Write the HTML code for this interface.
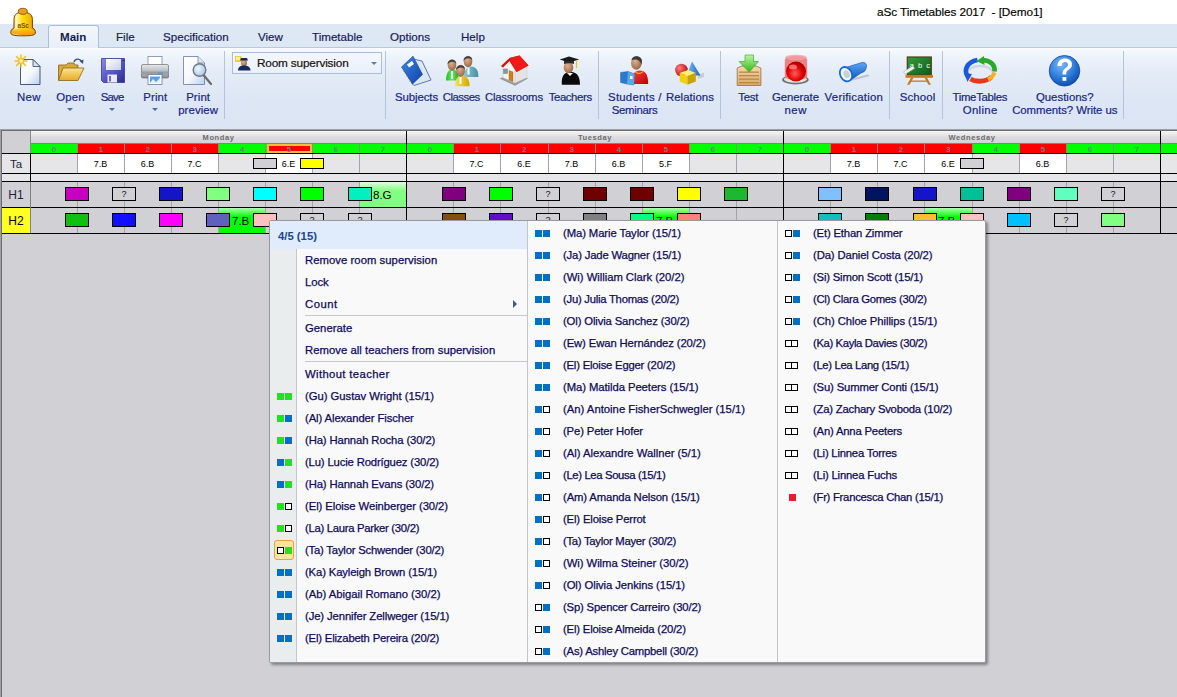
<!DOCTYPE html>
<html><head><meta charset="utf-8"><title>aSc Timetables</title>
<style>
*{box-sizing:border-box;margin:0;padding:0}
html,body{width:1177px;height:697px;overflow:hidden}
body{position:relative;background:#d0d0d5;font-family:"Liberation Sans", sans-serif;font-size:11.3px;color:#1e2a5e}
.a{position:absolute}
.t{position:absolute;white-space:nowrap;line-height:14px}
.rl{position:absolute;white-space:nowrap;line-height:13px;text-align:center;color:#172680;font-size:11.4px;-webkit-text-stroke:0.2px #172680}
.sep{position:absolute;width:1px;background:#b4c4d8;top:51px;height:68px}
.dd{position:absolute;width:0;height:0;border-left:3px solid transparent;border-right:3px solid transparent;border-top:3px solid #4a6aa0}
.pl{position:absolute;top:144px;height:9px;font:bold 8px "Liberation Sans", sans-serif;color:#6f8088;text-align:center;line-height:12px;border-left:1px solid #8a8a8a}
.hl{position:absolute;top:132px;height:11px;font:bold 7.5px "Liberation Sans", sans-serif;color:#6c6c6c;text-align:center;line-height:12px;overflow:hidden;letter-spacing:0.6px}
.vl{position:absolute;width:1px;background:#a4a4a8}
.bk{position:absolute;background:#000}
.bx{position:absolute;width:24px;height:14px;border:1px solid #000}
.q{font:9px "Liberation Sans", sans-serif;color:#111;text-align:center;line-height:12px}
.cl{position:absolute;font:9px "Liberation Sans", sans-serif;color:#000;text-align:center;line-height:19px;top:155px;height:18px}
.mi{position:absolute;white-space:nowrap;height:22px;line-height:22px;color:#0e0a58;font-size:11.3px;-webkit-text-stroke:0.25px #0e0a58}
.ic{position:absolute;width:7px;height:7px}
.g{background:#22e022}
.b{background:#0070c4}
.o{border:1px solid #000;background:#fff}
.r{background:#e0202a}
</style></head><body>
<div class="a" style="left:0;top:0;width:1177px;height:24px;background:#fff"></div>
<div class="t" style="left:877px;top:5px;font-size:11.8px;color:#000;letter-spacing:-0.1px;-webkit-text-stroke:0.15px #000">aSc Timetables 2017&nbsp; - [Demo1]</div>
<div class="a" style="left:0;top:24px;width:1177px;height:24px;background:#dee8f5;border-bottom:1px solid #b8c9de"></div>
<div class="a" style="left:48px;top:25px;width:51px;height:24px;background:linear-gradient(#f3f7fc,#e6eef8);border:1px solid #a9c0dd;border-bottom:none;border-radius:3px 3px 0 0"></div>
<div class="t" style="left:60px;top:30px;font-size:11.6px;font-weight:bold;color:#141a50;">Main</div>
<div class="t" style="left:116px;top:30px;font-size:11.6px;color:#161c58;-webkit-text-stroke:0.2px #161c58;">File</div>
<div class="t" style="left:163px;top:30px;font-size:11.6px;color:#161c58;-webkit-text-stroke:0.2px #161c58;">Specification</div>
<div class="t" style="left:258px;top:30px;font-size:11.6px;color:#161c58;-webkit-text-stroke:0.2px #161c58;">View</div>
<div class="t" style="left:312px;top:30px;font-size:11.6px;color:#161c58;-webkit-text-stroke:0.2px #161c58;">Timetable</div>
<div class="t" style="left:390px;top:30px;font-size:11.6px;color:#161c58;-webkit-text-stroke:0.2px #161c58;">Options</div>
<div class="t" style="left:461px;top:30px;font-size:11.6px;color:#161c58;-webkit-text-stroke:0.2px #161c58;">Help</div>
<svg class="a" style="left:0;top:0" width="45" height="40" viewBox="0 0 45 40">
<defs><linearGradient id="bellg" x1="0" y1="0" x2="1" y2="0"><stop offset="0" stop-color="#f0b000"/><stop offset="0.22" stop-color="#fff8c0"/><stop offset="0.45" stop-color="#ffe010"/><stop offset="1" stop-color="#e89a00"/></linearGradient>
<linearGradient id="bellr" x1="0" y1="0" x2="0" y2="1"><stop offset="0" stop-color="#ffc820"/><stop offset="1" stop-color="#ff8800"/></linearGradient></defs>
<path d="M14 28 L14 19.5 C14 13.5 18 12.3 23 12.3 C28 12.3 32.4 13.5 32.4 19.5 L32.4 28 C35 29 35.6 31 35.4 33 C35 35.5 30 35.8 23 35.8 C16 35.8 11 35.5 10.8 33 C10.6 31 11.5 29 14 28 Z" fill="url(#bellg)" stroke="#7a3c08" stroke-width="1"/>
<path d="M12 31 C14 29 18 28.5 23 28.5 C28 28.5 32 29 34.5 31 C34.5 34 30 35 23 35 C16 35 12 34 12 31 Z" fill="url(#bellr)" opacity="0.85"/>
<ellipse cx="22.8" cy="11.3" rx="4.5" ry="3" fill="#e8a018" stroke="#8a5010" stroke-width="0.9"/>
<text x="23.2" y="28" font-family="Liberation Sans" font-weight="bold" font-size="6.5" fill="#8a4a18" text-anchor="middle">aSc</text>
</svg>
<div class="a" style="left:0;top:48px;width:1177px;height:81px;background:linear-gradient(#f8fbff 0%,#f2f7fd 5%,#eaf1fa 15%,#e4ecf7 30%,#e2eaf6 40%,#dce6f4 70%,#dae4f3 100%)"></div>
<div class="a" style="left:0;top:129px;width:1177px;height:1px;background:#a0a0a4"></div>
<div class="a" style="left:0;top:130px;width:1177px;height:1px;background:#6e6e72"></div>
<div class="sep" style="left:224px"></div>
<div class="sep" style="left:385px"></div>
<div class="sep" style="left:598px"></div>
<div class="sep" style="left:720px"></div>
<div class="sep" style="left:889px"></div>
<div class="sep" style="left:942px"></div>
<div class="sep" style="left:1123px"></div>
<div class="rl" style="left:-31.05px;width:120px;top:91px;letter-spacing:0.404px">New</div>
<div class="rl" style="left:10.58px;width:120px;top:91px;letter-spacing:0.159px">Open</div>
<div class="dd" style="left:67px;top:108px"></div>
<div class="rl" style="left:52.13px;width:120px;top:91px;letter-spacing:-0.741px">Save</div>
<div class="dd" style="left:109px;top:108px"></div>
<div class="rl" style="left:95.36px;width:120px;top:91px;letter-spacing:0.116px">Print</div>
<div class="dd" style="left:152px;top:108px"></div>
<div class="rl" style="left:138.16px;width:120px;top:91px;letter-spacing:0.116px">Print</div>
<div class="rl" style="left:138.15px;width:120px;top:104px;letter-spacing:0.107px">preview</div>
<div class="rl" style="left:356.56px;width:120px;top:91px;letter-spacing:-0.086px">Subjects</div>
<div class="rl" style="left:401.25px;width:120px;top:91px;letter-spacing:-0.502px">Classes</div>
<div class="rl" style="left:453.89px;width:120px;top:91px;letter-spacing:-0.213px">Classrooms</div>
<div class="rl" style="left:510.20px;width:120px;top:91px;letter-spacing:-0.402px">Teachers</div>
<div class="rl" style="left:574.86px;width:120px;top:91px;letter-spacing:0.221px">Students /</div>
<div class="rl" style="left:574.59px;width:120px;top:104px;letter-spacing:-0.314px">Seminars</div>
<div class="rl" style="left:629.93px;width:120px;top:91px;letter-spacing:0.057px">Relations</div>
<div class="rl" style="left:688.19px;width:120px;top:91px;letter-spacing:-0.222px">Test</div>
<div class="rl" style="left:735.47px;width:120px;top:91px;letter-spacing:-0.062px">Generate</div>
<div class="rl" style="left:735.77px;width:120px;top:104px;letter-spacing:0.535px">new</div>
<div class="rl" style="left:793.92px;width:120px;top:91px;letter-spacing:0.240px">Verification</div>
<div class="rl" style="left:857.56px;width:120px;top:91px;letter-spacing:0.129px">School</div>
<div class="rl" style="left:919.83px;width:120px;top:91px;letter-spacing:-0.331px">TimeTables</div>
<div class="rl" style="left:920.16px;width:120px;top:104px;letter-spacing:0.312px">Online</div>
<div class="rl" style="left:1004.81px;width:120px;top:91px;letter-spacing:0.018px">Questions?</div>
<div class="rl" style="left:1004.77px;width:120px;top:104px;letter-spacing:-0.052px">Comments? Write us</div>
<div class="a" style="left:232px;top:52px;width:150px;height:22px;border:1px solid #a6bddb;background:linear-gradient(#f4f8fd,#e9f0f9)"></div>
<div class="t" style="left:257px;top:56px;font-size:11.8px;color:#1a1010;letter-spacing:-0.18px;-webkit-text-stroke:0.2px #1a1010">Room supervision</div>
<div class="dd" style="left:371px;top:62px;border-top-color:#5a7ab0"></div>
<svg class="a" style="left:0;top:0" width="1177" height="130" viewBox="0 0 1177 130">
<defs>
<linearGradient id="gpage" x1="0" y1="0" x2="1" y2="1"><stop offset="0" stop-color="#ffffff"/><stop offset="0.55" stop-color="#f4f7fc"/><stop offset="1" stop-color="#b8d0f0"/></linearGradient>
<radialGradient id="gstar" cx="0.5" cy="0.5" r="0.5"><stop offset="0" stop-color="#fffbe0"/><stop offset="0.4" stop-color="#fde878"/><stop offset="1" stop-color="#f0b818"/></radialGradient>
<linearGradient id="gfold" x1="0" y1="0" x2="0" y2="1"><stop offset="0" stop-color="#fbe49a"/><stop offset="1" stop-color="#e0a830"/></linearGradient>
<linearGradient id="gfold2" x1="0" y1="0" x2="0" y2="1"><stop offset="0" stop-color="#fde490"/><stop offset="1" stop-color="#e6aa28"/></linearGradient>
<linearGradient id="gsave" x1="0" y1="0" x2="1" y2="1"><stop offset="0" stop-color="#8a8ae8"/><stop offset="0.5" stop-color="#5858c8"/><stop offset="1" stop-color="#2a2a90"/></linearGradient>
<linearGradient id="glabel" x1="0" y1="0" x2="1" y2="1"><stop offset="0" stop-color="#ffffff"/><stop offset="1" stop-color="#c8d0e8"/></linearGradient>
<linearGradient id="gprint" x1="0" y1="0" x2="0" y2="1"><stop offset="0" stop-color="#e8eaec"/><stop offset="0.5" stop-color="#b8bcc0"/><stop offset="1" stop-color="#8a8e94"/></linearGradient>
<radialGradient id="glens" cx="0.4" cy="0.4" r="0.6"><stop offset="0" stop-color="#f0f8ff"/><stop offset="1" stop-color="#a8c8ec"/></radialGradient>
<linearGradient id="gbook" x1="0" y1="0" x2="1" y2="1"><stop offset="0" stop-color="#3a8ae8"/><stop offset="1" stop-color="#1040a8"/></linearGradient>
<radialGradient id="gskin" cx="0.4" cy="0.35" r="0.65"><stop offset="0" stop-color="#e0b090"/><stop offset="1" stop-color="#9a6a48"/></radialGradient>
<linearGradient id="ggreen" x1="0" y1="0" x2="1" y2="0"><stop offset="0" stop-color="#20c020"/><stop offset="0.5" stop-color="#60f060"/><stop offset="1" stop-color="#18a818"/></linearGradient>
<linearGradient id="gteal" x1="0" y1="0" x2="1" y2="0"><stop offset="0" stop-color="#88c8d8"/><stop offset="1" stop-color="#4a8ea8"/></linearGradient>
<linearGradient id="gyel" x1="0" y1="0" x2="1" y2="0"><stop offset="0" stop-color="#f8e060"/><stop offset="1" stop-color="#d0a800"/></linearGradient>
<linearGradient id="gred" x1="0" y1="0" x2="1" y2="1"><stop offset="0" stop-color="#ff4040"/><stop offset="1" stop-color="#c00000"/></linearGradient>
<radialGradient id="gball" cx="0.35" cy="0.35" r="0.7"><stop offset="0" stop-color="#ff8080"/><stop offset="1" stop-color="#b00808"/></radialGradient>
<linearGradient id="gcone" x1="0" y1="0" x2="1" y2="0"><stop offset="0" stop-color="#80c0ff"/><stop offset="1" stop-color="#1860c0"/></linearGradient>
<linearGradient id="gbox" x1="0" y1="0" x2="0" y2="1"><stop offset="0" stop-color="#f5d8a8"/><stop offset="1" stop-color="#d8a868"/></linearGradient>
<linearGradient id="garrow" x1="0" y1="0" x2="0" y2="1"><stop offset="0" stop-color="#b8f8a0"/><stop offset="1" stop-color="#30b818"/></linearGradient>
<radialGradient id="gsiren" cx="0.45" cy="0.6" r="0.6"><stop offset="0" stop-color="#ff6060"/><stop offset="0.6" stop-color="#e00000"/><stop offset="1" stop-color="#a80000"/></radialGradient>
<linearGradient id="gflash" x1="0" y1="0" x2="0" y2="1"><stop offset="0" stop-color="#58a8f8"/><stop offset="1" stop-color="#1050b8"/></linearGradient>
<radialGradient id="gq" cx="0.4" cy="0.3" r="0.75"><stop offset="0" stop-color="#7ab8f8"/><stop offset="0.6" stop-color="#2a78d8"/><stop offset="1" stop-color="#0a48a8"/></radialGradient>
<linearGradient id="gboard" x1="0" y1="0" x2="1" y2="1"><stop offset="0" stop-color="#30a040"/><stop offset="1" stop-color="#0a5a18"/></linearGradient>
</defs>
<!-- New -->
<path d="M20.5 59.5 L33 59.5 L40 66.5 L40 84.5 L20.5 84.5 Z" fill="url(#gpage)" stroke="#34486a" stroke-width="0.9"/>
<path d="M33 59.5 L33 66.5 L40 66.5 Z" fill="#d8e2f0" stroke="#34486a" stroke-width="0.8"/>
<g stroke="#f2c020" stroke-width="1.5" stroke-linecap="round"><line x1="21" y1="55" x2="21" y2="67"/><line x1="15" y1="61" x2="27" y2="61"/><line x1="16.5" y1="56.5" x2="25.5" y2="65.5"/><line x1="25.5" y1="56.5" x2="16.5" y2="65.5"/></g>
<circle cx="21" cy="61" r="3" fill="url(#gstar)"/>
<!-- Open -->
<path d="M58.5 65 L66 65 L68 63 L74 63 L75 65 L78 65 L78 68 L58.5 80 Z" fill="#d8a838" stroke="#8a6418" stroke-width="0.8"/>
<path d="M63 68 L84 68 L78 80.5 L58.5 80.5 Z" fill="url(#gfold2)" stroke="#8a6418" stroke-width="0.8"/>
<path d="M74 62 C75 58.5 80 58 81.5 61.5" fill="none" stroke="#3a5078" stroke-width="1.3"/><path d="M79.5 61 L83 64 L83.5 59.5 Z" fill="#3a5078"/>
<!-- Save -->
<path d="M101.5 58.5 L124.5 58.5 L124.5 82.5 L103.5 82.5 L101.5 80.5 Z" fill="url(#gsave)" stroke="#2a2a80" stroke-width="0.7"/>
<rect x="106" y="59" width="15" height="11" fill="url(#glabel)"/>
<rect x="107.5" y="74.5" width="9.5" height="8" fill="#e8eaf4"/><rect x="109" y="76" width="2" height="5.5" fill="#6a6ad0"/>
<circle cx="123" cy="60.5" r="0.8" fill="#202070"/>
<!-- Print -->
<rect x="148" y="56.5" width="14" height="9" fill="#fff" stroke="#7a8aa8" stroke-width="0.8"/>
<path d="M141.5 66 Q141.5 64.5 143 64.5 L167 64.5 Q168.5 64.5 168.5 66 L168.5 77 Q168.5 78 167 78 L143 78 Q141.5 78 141.5 77 Z" fill="url(#gprint)" stroke="#6a6e74" stroke-width="0.7"/>
<rect x="141.5" y="71.5" width="27" height="2.5" fill="#9a9ea4"/><rect x="158" y="72.5" width="5" height="1.2" fill="#3a9ae8"/>
<rect x="148" y="74.5" width="14" height="10" fill="#fff" stroke="#6a7a98" stroke-width="0.8"/><rect x="150" y="76.5" width="10" height="6.5" fill="#5aa0e8"/><path d="M150 83 L153 79 L156 82 L160 78 L160 83 Z" fill="#dff0ff"/>
<!-- Print preview -->
<path d="M183.5 56.5 L198 56.5 L204.5 63 L204.5 84.5 L183.5 84.5 Z" fill="url(#gpage)" stroke="#6a7a98" stroke-width="0.8"/>
<path d="M198 56.5 L198 63 L204.5 63" fill="#dde4ee" stroke="#6a7a98" stroke-width="0.7"/>
<line x1="203.5" y1="75" x2="211" y2="84" stroke="#6a6a6a" stroke-width="2.2" stroke-linecap="round"/>
<circle cx="199.5" cy="70" r="6.3" fill="url(#glens)" stroke="#707880" stroke-width="1.4"/>
<!-- Subjects -->
<path d="M413 59 L422 61 L431 80 L414 85.5 L412 83.5 Z" fill="#dce8ee" stroke="#3a5aa8" stroke-width="0.8"/>
<path d="M413 56.2 L422.5 74.5 L412.5 84 L401.5 67 Z" fill="url(#gbook)" stroke="#0e3888" stroke-width="0.6"/>
<path d="M407 64.5 L412 61 L414 64 L409 67.5 Z" fill="#fff"/>
<g fill="#777"><circle cx="402.5" cy="68.5" r="0.6"/><circle cx="404" cy="71" r="0.6"/><circle cx="405.5" cy="73.5" r="0.6"/><circle cx="407" cy="76" r="0.6"/><circle cx="408.5" cy="78.5" r="0.6"/><circle cx="410" cy="81" r="0.6"/></g>
<!-- Classes -->
<path d="M464 77 C464 69.5 467.5 66.5 471 66.5 C475 66.5 478.3 69.5 478.3 75.5 L478.3 77 Z" fill="url(#gteal)"/><rect x="467.5" y="67.5" width="2" height="7" fill="#fff"/>
<ellipse cx="468" cy="61.5" rx="4.3" ry="5.8" fill="url(#gskin)"/><path d="M463.6 61 C463 55 472.5 54.5 472.4 60.5 C471 57.5 465.5 57.5 463.6 61 Z" fill="#404040"/>
<path d="M446 80.5 C446 72.5 449 69.5 452.3 69.5 C456 69.5 458.7 72.5 458.7 80.5 Z" fill="url(#ggreen)"/><rect x="451" y="71" width="2" height="8" fill="#fff"/>
<ellipse cx="452" cy="65" rx="4.3" ry="5.8" fill="url(#gskin)"/><path d="M447.6 64.5 C447 58.5 456.5 58 456.4 64 C455 61 449.5 61 447.6 64.5 Z" fill="#404040"/>
<path d="M455 86.3 C455 78.5 458 75.5 462 75.5 C466 75.5 469.6 78.5 469.6 86.3 Z" fill="url(#gyel)"/><rect x="459.5" y="77" width="2" height="7" fill="#fff"/>
<ellipse cx="460.6" cy="70.7" rx="4.4" ry="6" fill="url(#gskin)"/><path d="M456.1 70.2 C455.5 64 465.2 63.5 465.1 69.7 C463.7 66.7 458 66.7 456.1 70.2 Z" fill="#404040"/>
<!-- Classrooms -->
<path d="M499.5 78.5 L515 85.7 L528 78.5 L515 73 Z" fill="#9a9a9a"/>
<path d="M503 66 L509 60 L515 70 L515 83 L503 77.5 Z" fill="#f4f4f4" stroke="#c8c8c8" stroke-width="0.5"/>
<path d="M515 70 L527 64 L527 77.5 L515 83 Z" fill="#e4e4e4" stroke="#c8c8c8" stroke-width="0.5"/>
<path d="M501 66 L509.5 58 L519.5 55.5 L528.5 65.5 L516.5 72 L509.5 61 L503 67.5 Z" fill="#e00808"/>
<path d="M509.5 58 L519.5 55.5 L528.5 65.5 L516.5 72 Z" fill="#ee1a1a"/>
<rect x="503.5" y="69" width="4" height="4.5" fill="#6a98d8" stroke="#b08040" stroke-width="0.6"/>
<path d="M509 70.5 L513 72 L513 81.5 L509 80 Z" fill="#d08018" stroke="#9a5a08" stroke-width="0.4"/>
<!-- Teachers -->
<path d="M561.8 84.8 C561 74 566 72 570.5 72 C575 72 580 74 580 84.8 Z" fill="#0a0a0a"/>
<path d="M567 73 L570 76 L573 73 Z" fill="#fff"/>
<ellipse cx="568.5" cy="67.5" rx="4.8" ry="5.8" fill="url(#gskin)"/>
<path d="M559.7 59.5 L569 56.4 L579.2 59.5 L569 62.5 Z" fill="#1a1a1a"/><path d="M564 61 L564 64 C566 63 572 63 574 64 L574 61 Z" fill="#2a2a2a"/>
<line x1="576.5" y1="60" x2="576.5" y2="68" stroke="#e8c020" stroke-width="1.2"/>
<!-- Students -->
<path d="M630.8 84 C630.8 74 635 70.5 640 70.5 C645 70.5 648.2 74 648.2 84 Z" fill="url(#gred)"/>
<path d="M635 71.5 C637 74 641 74 643 71.5" fill="none" stroke="#f0d040" stroke-width="1"/>
<ellipse cx="636.3" cy="63" rx="5.3" ry="6.8" fill="url(#gskin)"/><path d="M631.5 60 C632 54.5 642 55 642 61 L641.5 65 C640.5 60 636 58.5 631.5 60 Z" fill="#3a3a3a"/>
<path d="M620.6 72.5 L628 71.5 L634.6 74 L634 84.8 L627 84 L620.6 82.5 Z" fill="#2a7ad0" stroke="#1a5aa8" stroke-width="0.5"/>
<path d="M628 71.5 L634.6 74 L634 84.8 L627 84 Z" fill="#5aa8e8"/><rect x="630" y="76" width="2.5" height="3" fill="#fff"/>
<!-- Relations -->
<path d="M698 75 L704 72.5 L704 77 L698 79 Z" fill="#c8ccd4"/>
<path d="M692 61.5 L700.5 75.5 L686.5 75.5 Z" fill="url(#gcone)"/>
<circle cx="681.4" cy="70" r="6.3" fill="url(#gball)"/>
<path d="M679.7 73 L688 70 L695.8 73 L687.5 76 Z" fill="#fff070"/>
<path d="M679.7 73 L687.5 76 L687.5 84.8 L679.7 81.5 Z" fill="#f0d010"/>
<path d="M687.5 76 L695.8 73 L695.8 81.5 L687.5 84.8 Z" fill="#c8a400"/>
<!-- Test -->
<path d="M737.2 68 L742 66 L756 66 L760.9 68 L760.9 85.5 L737.2 85.5 Z" fill="url(#gbox)" stroke="#9a7040" stroke-width="0.8"/>
<rect x="739" y="71.5" width="20" height="1.3" fill="#b8884a"/><rect x="739" y="75" width="20" height="1.3" fill="#b8884a"/><rect x="739" y="78.5" width="20" height="1.3" fill="#b8884a"/><rect x="739" y="82" width="20" height="1.3" fill="#b8884a"/>
<path d="M745 55 L753.5 55 L753.5 61.5 L758.5 61.5 L749.2 72 L739 61.5 L745 61.5 Z" fill="url(#garrow)" stroke="#3a9a28" stroke-width="0.6"/>
<!-- Generate new -->
<ellipse cx="795.4" cy="79.8" rx="13.3" ry="4.7" fill="#707070"/><ellipse cx="795.4" cy="79.3" rx="11.5" ry="3.4" fill="#e4e4e4"/>
<path d="M784.8 60 C784.8 54.5 807.2 54.5 807.2 60 L807.2 76 C807.2 81.5 784.8 81.5 784.8 76 Z" fill="#e86868" opacity="0.8"/>
<ellipse cx="796" cy="57.5" rx="11" ry="2.8" fill="#f4a0a0" opacity="0.8"/>
<circle cx="796" cy="71.5" r="10" fill="url(#gsiren)"/>
<ellipse cx="793" cy="67" rx="4" ry="2.5" fill="#ff9a9a" opacity="0.7"/>
<!-- Verification -->
<path d="M852 79.5 L868 75.5" stroke="#bcc4cc" stroke-width="2.2" stroke-linecap="round"/>
<path d="M844 68 L862 62.5 Q866.5 62 866.5 66 L866 69 Q865 72 861 73 L850 80.5 Z" fill="url(#gflash)" stroke="#0e4aa8" stroke-width="0.6"/>
<ellipse cx="846" cy="74.2" rx="5.8" ry="7.5" transform="rotate(-28 846 74.2)" fill="#f4f6f8" stroke="#1a6ad8" stroke-width="1.8"/>
<ellipse cx="846.5" cy="74.5" rx="3" ry="4" transform="rotate(-28 846 74.2)" fill="#c8d0d8"/>
<!-- School -->
<rect x="907.3" y="57" width="24" height="18" fill="url(#gboard)" stroke="#5a3a10" stroke-width="1.2"/>
<text x="920.5" y="67.5" font-family="Liberation Sans" font-size="7.5" fill="#fff" text-anchor="middle" letter-spacing="1">a b c</text>
<rect x="905.5" y="75" width="27.5" height="2.8" fill="#c8781e"/>
<path d="M911 77.8 L907 84.7 L909.5 84.7 L913.5 77.8 Z M927 77.8 L931 84.7 L928.5 84.7 L924.5 77.8 Z" fill="#c8781e"/><rect x="911" y="80.5" width="16" height="1.3" fill="#c8781e"/>
<path d="M903.5 71.8 L912.8 66 L914.6 68.5 L905.2 74.2 Z" fill="#f4f4f4" stroke="#9a9a9a" stroke-width="0.5"/>
<!-- TimeTables Online -->
<ellipse cx="980" cy="73" rx="13" ry="7" fill="none" stroke="#c0c4cc" stroke-width="2.5" opacity="0.6"/>
<path d="M967.5 76 C963.5 70 967 62 977.5 60" fill="none" stroke="#1a5ad8" stroke-width="4.6"/>
<path d="M964 73 L967.5 82 L972 74 Z" fill="#1a5ad8"/>
<path d="M983 60 C990.5 60.5 995.5 65 994.5 71.5" fill="none" stroke="#2aa82a" stroke-width="4.6"/>
<path d="M984 56 L976.5 61 L984.5 65 Z" fill="#2aa82a"/>
<path d="M970.5 79 C976 82.5 986 82 991.5 77" fill="none" stroke="#e83818" stroke-width="4.8"/>
<path d="M988 79.5 C991 78 993.5 76 994.5 72.5" fill="none" stroke="#f8b020" stroke-width="4"/>
<!-- Questions -->
<circle cx="1064.5" cy="70.8" r="15.3" fill="url(#gq)" stroke="#0a3a90" stroke-width="0.7"/>
<path d="M1057.5 66 C1057.5 60.5 1061 58.5 1065 58.5 C1069.5 58.5 1072 61 1072 64.5 C1072 68 1069.5 69 1067.5 70.5 C1066.5 71.3 1066.3 72.5 1066.3 74.5 L1062.5 74.5 C1062.5 71.5 1063 70 1065 68.5 C1067 67 1068 66.3 1068 64.5 C1068 63 1067 62 1065 62 C1063 62 1061.8 63.3 1061.6 66 Z" fill="#fff"/>
<rect x="1062.5" y="77" width="3.8" height="3.8" fill="#fff"/>
<!-- Room supervision small icon -->
<rect x="235" y="56" width="6.5" height="6" fill="#e8d040"/><rect x="236" y="57" width="4" height="3" fill="#f8f0a0"/>
<ellipse cx="244" cy="63" rx="3" ry="3.2" fill="url(#gskin)"/>
<path d="M240 60.5 L248 60.5 L247 58 L241 58 Z" fill="#1a2a50"/>
<path d="M238 70.5 C238 66.5 241 65.5 244 65.5 C247 65.5 250.5 66.5 250.5 70.5 Z" fill="#1a2a60"/>
</svg>
<div class="a" style="left:0;top:129px;width:1px;height:568px;background:#a0a0a4"></div>
<div class="a" style="left:1px;top:130px;width:1px;height:567px;background:#6e6e72"></div>
<div class="a" style="left:2px;top:131px;width:28px;height:22px;background:#d0d0d5"></div>
<div class="a" style="left:31px;top:131px;width:1146px;height:12px;background:linear-gradient(#f6f6f8 0%,#dcdce0 55%,#d2d2d6 100%)"></div>
<div class="a" style="left:31px;top:143px;width:1146px;height:1px;background:#788888"></div>
<div class="a" style="left:2px;top:154px;width:1175px;height:19px;background:#e6e6e8"></div>
<div class="a" style="left:2px;top:174px;width:1175px;height:7px;background:#e6e6e8"></div>
<div class="a" style="left:2px;top:182px;width:1175px;height:25px;background:#d0d0d5"></div>
<div class="a" style="left:2px;top:208px;width:1175px;height:25px;background:#d0d0d5"></div>
<div class="a" style="left:2px;top:208px;width:28px;height:25px;background:#ffff20"></div>
<div class="t" style="left:2px;width:28px;text-align:center;top:157px;font-size:11.5px;color:#1e1e3e;line-height:14px">Ta</div>
<div class="t" style="left:2px;width:28px;text-align:center;top:188px;font-size:12px;color:#1e1e3e;line-height:14px">H1</div>
<div class="t" style="left:2px;width:28px;text-align:center;top:214px;font-size:12px;color:#000;line-height:14px">H2</div>
<div class="hl" style="left:31px;width:375px">Monday</div>
<div class="pl" style="left:31px;width:46px;background:#00ff00;border-left:none">0</div>
<div class="pl" style="left:77px;width:47px;background:#ff0000">1</div>
<div class="pl" style="left:124px;width:47px;background:#ff0000">2</div>
<div class="pl" style="left:171px;width:47px;background:#ff0000">3</div>
<div class="pl" style="left:218px;width:47px;background:#00ff00">4</div>
<div class="pl" style="left:265px;width:47px;background:#00ff00;padding:0"><div style="position:absolute;left:1px;top:0;width:45px;height:9px;border:2px solid #f0c040;background:#ff0000"></div><span style="position:relative">5</span></div>
<div class="pl" style="left:312px;width:47px;background:#00ff00">6</div>
<div class="pl" style="left:359px;width:47px;background:#00ff00">7</div>
<div class="a" style="left:77px;top:154px;width:47px;height:19px;background:#fff"></div>
<div class="a" style="left:124px;top:154px;width:47px;height:19px;background:#fff"></div>
<div class="a" style="left:171px;top:154px;width:47px;height:19px;background:#fff"></div>
<div class="a" style="left:265px;top:154px;width:47px;height:19px;background:#fff"></div>
<div class="a" style="left:360px;top:182px;width:46px;height:25px;background:linear-gradient(#e0ffe0 0px,#80ff80 9px)"></div>
<div class="a" style="left:219px;top:208px;width:46px;height:25px;background:linear-gradient(#b0ffb0 0px,#00ff00 9px)"></div>
<div class="vl" style="left:77px;top:154px;height:19px"></div>
<div class="vl" style="left:77px;top:182px;height:51px"></div>
<div class="vl" style="left:124px;top:154px;height:19px"></div>
<div class="vl" style="left:124px;top:182px;height:51px"></div>
<div class="vl" style="left:171px;top:154px;height:19px"></div>
<div class="vl" style="left:171px;top:182px;height:51px"></div>
<div class="vl" style="left:218px;top:154px;height:19px"></div>
<div class="vl" style="left:218px;top:182px;height:51px"></div>
<div class="vl" style="left:265px;top:154px;height:19px"></div>
<div class="vl" style="left:265px;top:182px;height:51px"></div>
<div class="vl" style="left:312px;top:154px;height:19px"></div>
<div class="vl" style="left:312px;top:182px;height:51px"></div>
<div class="vl" style="left:359px;top:154px;height:19px"></div>
<div class="vl" style="left:359px;top:182px;height:51px"></div>
<div class="cl" style="left:77px;width:47px">7.B</div>
<div class="cl" style="left:124px;width:47px">6.B</div>
<div class="cl" style="left:171px;width:47px">7.C</div>
<div class="cl" style="left:265px;width:47px">6.E</div>
<div class="bx" style="left:253px;top:158px;height:11px;background:#d0d0d5"></div>
<div class="bx" style="left:300px;top:158px;height:11px;background:#ffff00"></div>
<div class="t" style="left:373px;top:188px;font-size:11.5px;color:#000">8.G</div>
<div class="t" style="left:232px;top:214px;font-size:11.5px;color:#000">7.B</div>
<div class="bx" style="left:65px;top:187px;background:#c800c0"></div>
<div class="bx q" style="left:112px;top:187px;background:#d0d0d5">?</div>
<div class="bx" style="left:159px;top:187px;background:#1414c8"></div>
<div class="bx" style="left:206px;top:187px;background:#80ff80"></div>
<div class="bx" style="left:253px;top:187px;background:#00ffff"></div>
<div class="bx" style="left:300px;top:187px;background:#00ff00"></div>
<div class="bx" style="left:348px;top:187px;background:#00f0c0"></div>
<div class="bx" style="left:65px;top:213px;background:#10c010"></div>
<div class="bx" style="left:112px;top:213px;background:#1010ff"></div>
<div class="bx" style="left:159px;top:213px;background:#ff00ff"></div>
<div class="bx" style="left:206px;top:213px;background:#6060c0"></div>
<div class="bx" style="left:253px;top:213px;background:#ffc0c0"></div>
<div class="bx q" style="left:300px;top:213px;background:#d0d0d5">?</div>
<div class="bx q" style="left:348px;top:213px;background:#d0d0d5">?</div>
<div class="bk" style="left:406px;top:131px;width:1px;height:103px"></div>
<div class="hl" style="left:407px;width:376px">Tuesday</div>
<div class="pl" style="left:407px;width:46px;background:#00ff00;border-left:none">0</div>
<div class="pl" style="left:453px;width:47px;background:#ff0000">1</div>
<div class="pl" style="left:500px;width:48px;background:#ff0000">2</div>
<div class="pl" style="left:548px;width:47px;background:#ff0000">3</div>
<div class="pl" style="left:595px;width:47px;background:#ff0000">4</div>
<div class="pl" style="left:642px;width:47px;background:#ff0000">5</div>
<div class="pl" style="left:689px;width:47px;background:#00ff00">6</div>
<div class="pl" style="left:736px;width:47px;background:#00ff00">7</div>
<div class="a" style="left:453px;top:154px;width:47px;height:19px;background:#fff"></div>
<div class="a" style="left:500px;top:154px;width:48px;height:19px;background:#fff"></div>
<div class="a" style="left:548px;top:154px;width:47px;height:19px;background:#fff"></div>
<div class="a" style="left:595px;top:154px;width:47px;height:19px;background:#fff"></div>
<div class="a" style="left:642px;top:154px;width:47px;height:19px;background:#fff"></div>
<div class="a" style="left:643px;top:208px;width:46px;height:25px;background:linear-gradient(#b0ffb0 0px,#00ff00 9px)"></div>
<div class="vl" style="left:453px;top:154px;height:19px"></div>
<div class="vl" style="left:453px;top:182px;height:51px"></div>
<div class="vl" style="left:500px;top:154px;height:19px"></div>
<div class="vl" style="left:500px;top:182px;height:51px"></div>
<div class="vl" style="left:548px;top:154px;height:19px"></div>
<div class="vl" style="left:548px;top:182px;height:51px"></div>
<div class="vl" style="left:595px;top:154px;height:19px"></div>
<div class="vl" style="left:595px;top:182px;height:51px"></div>
<div class="vl" style="left:642px;top:154px;height:19px"></div>
<div class="vl" style="left:642px;top:182px;height:51px"></div>
<div class="vl" style="left:689px;top:154px;height:19px"></div>
<div class="vl" style="left:689px;top:182px;height:51px"></div>
<div class="vl" style="left:736px;top:154px;height:19px"></div>
<div class="vl" style="left:736px;top:182px;height:51px"></div>
<div class="cl" style="left:453px;width:47px">7.C</div>
<div class="cl" style="left:500px;width:48px">6.E</div>
<div class="cl" style="left:548px;width:47px">7.B</div>
<div class="cl" style="left:595px;width:47px">6.B</div>
<div class="cl" style="left:642px;width:47px">5.F</div>
<div class="t" style="left:656px;top:214px;font-size:11.5px;color:#000">7.B</div>
<div class="bx" style="left:442px;top:187px;background:#800080"></div>
<div class="bx" style="left:489px;top:187px;background:#00ff00"></div>
<div class="bx q" style="left:536px;top:187px;background:#d0d0d5">?</div>
<div class="bx" style="left:583px;top:187px;background:#700000"></div>
<div class="bx" style="left:630px;top:187px;background:#700000"></div>
<div class="bx" style="left:677px;top:187px;background:#ffff00"></div>
<div class="bx" style="left:724px;top:187px;background:#1cb830"></div>
<div class="bx" style="left:442px;top:213px;background:#805010"></div>
<div class="bx" style="left:489px;top:213px;background:#6010c0"></div>
<div class="bx q" style="left:536px;top:213px;background:#d0d0d5">?</div>
<div class="bx" style="left:583px;top:213px;background:#808080"></div>
<div class="bx" style="left:630px;top:213px;background:#00ff80"></div>
<div class="bx" style="left:677px;top:213px;background:#ff8080"></div>
<div class="bk" style="left:783px;top:131px;width:1px;height:103px"></div>
<div class="hl" style="left:784px;width:376px">Wednesday</div>
<div class="pl" style="left:784px;width:46px;background:#00ff00;border-left:none">0</div>
<div class="pl" style="left:830px;width:47px;background:#ff0000">1</div>
<div class="pl" style="left:877px;width:47px;background:#ff0000">2</div>
<div class="pl" style="left:924px;width:48px;background:#ff0000">3</div>
<div class="pl" style="left:972px;width:47px;background:#00ff00">4</div>
<div class="pl" style="left:1019px;width:47px;background:#ff0000">5</div>
<div class="pl" style="left:1066px;width:47px;background:#00ff00">6</div>
<div class="pl" style="left:1113px;width:47px;background:#00ff00">7</div>
<div class="a" style="left:830px;top:154px;width:47px;height:19px;background:#fff"></div>
<div class="a" style="left:877px;top:154px;width:47px;height:19px;background:#fff"></div>
<div class="a" style="left:924px;top:154px;width:48px;height:19px;background:#fff"></div>
<div class="a" style="left:1019px;top:154px;width:47px;height:19px;background:#fff"></div>
<div class="a" style="left:925px;top:208px;width:47px;height:25px;background:linear-gradient(#b0ffb0 0px,#00ff00 9px)"></div>
<div class="vl" style="left:830px;top:154px;height:19px"></div>
<div class="vl" style="left:830px;top:182px;height:51px"></div>
<div class="vl" style="left:877px;top:154px;height:19px"></div>
<div class="vl" style="left:877px;top:182px;height:51px"></div>
<div class="vl" style="left:924px;top:154px;height:19px"></div>
<div class="vl" style="left:924px;top:182px;height:51px"></div>
<div class="vl" style="left:972px;top:154px;height:19px"></div>
<div class="vl" style="left:972px;top:182px;height:51px"></div>
<div class="vl" style="left:1019px;top:154px;height:19px"></div>
<div class="vl" style="left:1019px;top:182px;height:51px"></div>
<div class="vl" style="left:1066px;top:154px;height:19px"></div>
<div class="vl" style="left:1066px;top:182px;height:51px"></div>
<div class="vl" style="left:1113px;top:154px;height:19px"></div>
<div class="vl" style="left:1113px;top:182px;height:51px"></div>
<div class="cl" style="left:830px;width:47px">7.B</div>
<div class="cl" style="left:877px;width:47px">7.C</div>
<div class="cl" style="left:924px;width:48px">6.E</div>
<div class="cl" style="left:1019px;width:47px">6.B</div>
<div class="bx" style="left:960px;top:158px;height:11px;background:#d0d0d5"></div>
<div class="t" style="left:938px;top:214px;font-size:11.5px;color:#000">7.B</div>
<div class="bx" style="left:818px;top:187px;background:#80c0ff"></div>
<div class="bx" style="left:865px;top:187px;background:#001460"></div>
<div class="bx" style="left:913px;top:187px;background:#1414c8"></div>
<div class="bx" style="left:960px;top:187px;background:#00c098"></div>
<div class="bx" style="left:1007px;top:187px;background:#800080"></div>
<div class="bx" style="left:1054px;top:187px;background:#60ffc0"></div>
<div class="bx q" style="left:1101px;top:187px;background:#d0d0d5">?</div>
<div class="bx" style="left:818px;top:213px;background:#10c0c0"></div>
<div class="bx" style="left:865px;top:213px;background:#008000"></div>
<div class="bx" style="left:913px;top:213px;background:#ffc030"></div>
<div class="bx" style="left:960px;top:213px;background:#ffc0c0"></div>
<div class="bx" style="left:1007px;top:213px;background:#00c0ff"></div>
<div class="bx q" style="left:1054px;top:213px;background:#d0d0d5">?</div>
<div class="bx" style="left:1101px;top:213px;background:#80ff80"></div>
<div class="bk" style="left:1160px;top:131px;width:1px;height:103px"></div>
<div class="bk" style="left:2px;top:153px;width:1175px;height:1px"></div>
<div class="bk" style="left:2px;top:173px;width:1175px;height:1px"></div>
<div class="bk" style="left:2px;top:181px;width:1175px;height:1px"></div>
<div class="bk" style="left:2px;top:207px;width:1175px;height:1px"></div>
<div class="bk" style="left:2px;top:233px;width:1175px;height:1px"></div>
<div class="a" style="left:30px;top:131px;width:1px;height:22px;background:#8a8a8e"></div>
<div class="bk" style="left:30px;top:153px;width:1px;height:29px"></div>
<div class="a" style="left:30px;top:182px;width:1px;height:51px;background:#808084"></div>
<div class="pl" style="left:1161px;width:16px;background:#00ff00;border-left:none"></div>
<div class="a" style="left:269px;top:220px;width:717px;height:443px;background:#f9f9f9;border:1px solid #9a9a9e;border-radius:2px;box-shadow:2px 2px 3px rgba(0,0,0,0.38)"></div>
<div class="a" style="left:270px;top:221px;width:258px;height:28px;background:#e0ecfb"></div>
<div class="t" style="left:278px;top:229px;font-weight:bold;font-size:11.3px;color:#1c4690">4/5 (15)</div>
<div class="a" style="left:270px;top:249px;width:26px;height:413px;background:#e9eded"></div>
<div class="a" style="left:296px;top:249px;width:1px;height:413px;background:#c4c8cc"></div>
<div class="a" style="left:527px;top:221px;width:1px;height:441px;background:#c4c4c8"></div>
<div class="a" style="left:777px;top:221px;width:1px;height:441px;background:#c4c4c8"></div>
<div class="mi" style="left:305px;top:249px;letter-spacing:0.043px">Remove room supervision</div>
<div class="mi" style="left:305px;top:271px;letter-spacing:-0.091px">Lock</div>
<div class="mi" style="left:305px;top:293px;letter-spacing:0.491px">Count</div>
<div class="a" style="left:513px;top:300px;width:0;height:0;border-top:4px solid transparent;border-bottom:4px solid transparent;border-left:4px solid #3c5a8c"></div>
<div class="a" style="left:305px;top:315px;width:222px;height:1px;background:#c8c8cc"></div>
<div class="mi" style="left:305px;top:317px;letter-spacing:0.012px">Generate</div>
<div class="mi" style="left:305px;top:339px;letter-spacing:0.034px">Remove all teachers from supervision</div>
<div class="a" style="left:305px;top:361px;width:222px;height:1px;background:#c8c8cc"></div>
<div class="mi" style="left:305px;top:363px;letter-spacing:0.366px">Without teacher</div>
<div class="mi" style="left:305px;top:385px;letter-spacing:-0.026px">(Gu) Gustav Wright (15/1)</div>
<div class="ic g" style="left:277px;top:393px"></div>
<div class="ic g" style="left:285px;top:393px"></div>
<div class="mi" style="left:305px;top:407px;letter-spacing:-0.107px">(Al) Alexander Fischer</div>
<div class="ic g" style="left:277px;top:415px"></div>
<div class="ic b" style="left:285px;top:415px"></div>
<div class="mi" style="left:305px;top:429px;letter-spacing:-0.122px">(Ha) Hannah Rocha (30/2)</div>
<div class="ic g" style="left:277px;top:437px"></div>
<div class="ic b" style="left:285px;top:437px"></div>
<div class="mi" style="left:305px;top:451px;letter-spacing:-0.157px">(Lu) Lucie Rodríguez (30/2)</div>
<div class="ic b" style="left:277px;top:459px"></div>
<div class="ic g" style="left:285px;top:459px"></div>
<div class="mi" style="left:305px;top:473px;letter-spacing:-0.120px">(Ha) Hannah Evans (30/2)</div>
<div class="ic b" style="left:277px;top:481px"></div>
<div class="ic g" style="left:285px;top:481px"></div>
<div class="mi" style="left:305px;top:495px;letter-spacing:-0.085px">(El) Eloise Weinberger (30/2)</div>
<div class="ic g" style="left:277px;top:503px"></div>
<div class="ic o" style="left:285px;top:503px"></div>
<div class="mi" style="left:305px;top:517px;letter-spacing:-0.295px">(La) Laura Parker (30/2)</div>
<div class="ic g" style="left:277px;top:525px"></div>
<div class="ic o" style="left:285px;top:525px"></div>
<div class="mi" style="left:305px;top:539px;letter-spacing:-0.205px">(Ta) Taylor Schwender (30/2)</div>
<div class="a" style="left:274px;top:540px;width:20px;height:20px;background:#fde3a0;border:1px solid #eea040;border-radius:3px"></div>
<div class="ic o" style="left:277px;top:547px"></div>
<div class="ic g" style="left:285px;top:547px"></div>
<div class="mi" style="left:305px;top:561px;letter-spacing:-0.147px">(Ka) Kayleigh Brown (15/1)</div>
<div class="ic b" style="left:277px;top:569px"></div>
<div class="ic b" style="left:285px;top:569px"></div>
<div class="mi" style="left:305px;top:583px;letter-spacing:-0.034px">(Ab) Abigail Romano (30/2)</div>
<div class="ic b" style="left:277px;top:591px"></div>
<div class="ic b" style="left:285px;top:591px"></div>
<div class="mi" style="left:305px;top:605px;letter-spacing:-0.111px">(Je) Jennifer Zellweger (15/1)</div>
<div class="ic b" style="left:277px;top:613px"></div>
<div class="ic b" style="left:285px;top:613px"></div>
<div class="mi" style="left:305px;top:627px;letter-spacing:-0.179px">(El) Elizabeth Pereira (20/2)</div>
<div class="ic b" style="left:277px;top:635px"></div>
<div class="ic b" style="left:285px;top:635px"></div>
<div class="mi" style="left:563px;top:222px;letter-spacing:-0.105px">(Ma) Marie Taylor (15/1)</div>
<div class="ic b" style="left:535px;top:230px"></div>
<div class="ic b" style="left:543px;top:230px"></div>
<div class="mi" style="left:563px;top:244px;letter-spacing:-0.175px">(Ja) Jade Wagner (15/1)</div>
<div class="ic b" style="left:535px;top:252px"></div>
<div class="ic b" style="left:543px;top:252px"></div>
<div class="mi" style="left:563px;top:266px;letter-spacing:-0.039px">(Wi) William Clark (20/2)</div>
<div class="ic b" style="left:535px;top:274px"></div>
<div class="ic b" style="left:543px;top:274px"></div>
<div class="mi" style="left:563px;top:288px;letter-spacing:-0.255px">(Ju) Julia Thomas (20/2)</div>
<div class="ic b" style="left:535px;top:296px"></div>
<div class="ic b" style="left:543px;top:296px"></div>
<div class="mi" style="left:563px;top:310px;letter-spacing:-0.137px">(Ol) Olivia Sanchez (30/2)</div>
<div class="ic b" style="left:535px;top:318px"></div>
<div class="ic b" style="left:543px;top:318px"></div>
<div class="mi" style="left:563px;top:332px;letter-spacing:-0.118px">(Ew) Ewan Hernández (20/2)</div>
<div class="ic b" style="left:535px;top:340px"></div>
<div class="ic b" style="left:543px;top:340px"></div>
<div class="mi" style="left:563px;top:354px;letter-spacing:-0.213px">(El) Eloise Egger (20/2)</div>
<div class="ic b" style="left:535px;top:362px"></div>
<div class="ic b" style="left:543px;top:362px"></div>
<div class="mi" style="left:563px;top:376px;letter-spacing:-0.074px">(Ma) Matilda Peeters (15/1)</div>
<div class="ic b" style="left:535px;top:384px"></div>
<div class="ic b" style="left:543px;top:384px"></div>
<div class="mi" style="left:563px;top:398px;letter-spacing:-0.000px">(An) Antoine FisherSchwegler (15/1)</div>
<div class="ic b" style="left:535px;top:406px"></div>
<div class="ic o" style="left:543px;top:406px"></div>
<div class="mi" style="left:563px;top:420px;letter-spacing:-0.147px">(Pe) Peter Hofer</div>
<div class="ic b" style="left:535px;top:428px"></div>
<div class="ic o" style="left:543px;top:428px"></div>
<div class="mi" style="left:563px;top:442px;letter-spacing:-0.023px">(Al) Alexandre Wallner (5/1)</div>
<div class="ic b" style="left:535px;top:450px"></div>
<div class="ic o" style="left:543px;top:450px"></div>
<div class="mi" style="left:563px;top:464px;letter-spacing:-0.362px">(Le) Lea Sousa (15/1)</div>
<div class="ic b" style="left:535px;top:472px"></div>
<div class="ic o" style="left:543px;top:472px"></div>
<div class="mi" style="left:563px;top:486px;letter-spacing:-0.133px">(Am) Amanda Nelson (15/1)</div>
<div class="ic b" style="left:535px;top:494px"></div>
<div class="ic o" style="left:543px;top:494px"></div>
<div class="mi" style="left:563px;top:508px;letter-spacing:-0.154px">(El) Eloise Perrot</div>
<div class="ic b" style="left:535px;top:516px"></div>
<div class="ic o" style="left:543px;top:516px"></div>
<div class="mi" style="left:563px;top:530px;letter-spacing:-0.279px">(Ta) Taylor Mayer (30/2)</div>
<div class="ic b" style="left:535px;top:538px"></div>
<div class="ic o" style="left:543px;top:538px"></div>
<div class="mi" style="left:563px;top:552px;letter-spacing:-0.056px">(Wi) Wilma Steiner (30/2)</div>
<div class="ic b" style="left:535px;top:560px"></div>
<div class="ic o" style="left:543px;top:560px"></div>
<div class="mi" style="left:563px;top:574px;letter-spacing:-0.088px">(Ol) Olivia Jenkins (15/1)</div>
<div class="ic b" style="left:535px;top:582px"></div>
<div class="ic o" style="left:543px;top:582px"></div>
<div class="mi" style="left:563px;top:596px;letter-spacing:-0.180px">(Sp) Spencer Carreiro (30/2)</div>
<div class="ic o" style="left:535px;top:604px"></div>
<div class="ic b" style="left:543px;top:604px"></div>
<div class="mi" style="left:563px;top:618px;letter-spacing:-0.180px">(El) Eloise Almeida (20/2)</div>
<div class="ic o" style="left:535px;top:626px"></div>
<div class="ic b" style="left:543px;top:626px"></div>
<div class="mi" style="left:563px;top:640px;letter-spacing:-0.210px">(As) Ashley Campbell (30/2)</div>
<div class="ic o" style="left:535px;top:648px"></div>
<div class="ic b" style="left:543px;top:648px"></div>
<div class="mi" style="left:813px;top:222px;letter-spacing:-0.169px">(Et) Ethan Zimmer</div>
<div class="ic o" style="left:785px;top:230px"></div>
<div class="ic b" style="left:793px;top:230px"></div>
<div class="mi" style="left:813px;top:244px;letter-spacing:-0.126px">(Da) Daniel Costa (20/2)</div>
<div class="ic o" style="left:785px;top:252px"></div>
<div class="ic b" style="left:793px;top:252px"></div>
<div class="mi" style="left:813px;top:266px;letter-spacing:-0.190px">(Si) Simon Scott (15/1)</div>
<div class="ic o" style="left:785px;top:274px"></div>
<div class="ic b" style="left:793px;top:274px"></div>
<div class="mi" style="left:813px;top:288px;letter-spacing:-0.292px">(Cl) Clara Gomes (30/2)</div>
<div class="ic o" style="left:785px;top:296px"></div>
<div class="ic b" style="left:793px;top:296px"></div>
<div class="mi" style="left:813px;top:310px;letter-spacing:-0.081px">(Ch) Chloe Phillips (15/1)</div>
<div class="ic o" style="left:785px;top:318px"></div>
<div class="ic b" style="left:793px;top:318px"></div>
<div class="mi" style="left:813px;top:332px;letter-spacing:-0.373px">(Ka) Kayla Davies (30/2)</div>
<div class="ic o" style="left:785px;top:340px"></div>
<div class="ic o" style="left:791px;top:340px"></div>
<div class="mi" style="left:813px;top:354px;letter-spacing:-0.355px">(Le) Lea Lang (15/1)</div>
<div class="ic o" style="left:785px;top:362px"></div>
<div class="ic o" style="left:791px;top:362px"></div>
<div class="mi" style="left:813px;top:376px;letter-spacing:-0.163px">(Su) Summer Conti (15/1)</div>
<div class="ic o" style="left:785px;top:384px"></div>
<div class="ic o" style="left:791px;top:384px"></div>
<div class="mi" style="left:813px;top:398px;letter-spacing:-0.224px">(Za) Zachary Svoboda (10/2)</div>
<div class="ic o" style="left:785px;top:406px"></div>
<div class="ic o" style="left:791px;top:406px"></div>
<div class="mi" style="left:813px;top:420px;letter-spacing:-0.190px">(An) Anna Peeters</div>
<div class="ic o" style="left:785px;top:428px"></div>
<div class="ic o" style="left:791px;top:428px"></div>
<div class="mi" style="left:813px;top:442px;letter-spacing:-0.217px">(Li) Linnea Torres</div>
<div class="ic o" style="left:785px;top:450px"></div>
<div class="ic o" style="left:791px;top:450px"></div>
<div class="mi" style="left:813px;top:464px;letter-spacing:-0.193px">(Li) Linnea Fuchs</div>
<div class="ic o" style="left:785px;top:472px"></div>
<div class="ic o" style="left:791px;top:472px"></div>
<div class="mi" style="left:813px;top:486px;letter-spacing:-0.268px">(Fr) Francesca Chan (15/1)</div>
<div class="ic r" style="left:789px;top:494px"></div>
</body></html>
